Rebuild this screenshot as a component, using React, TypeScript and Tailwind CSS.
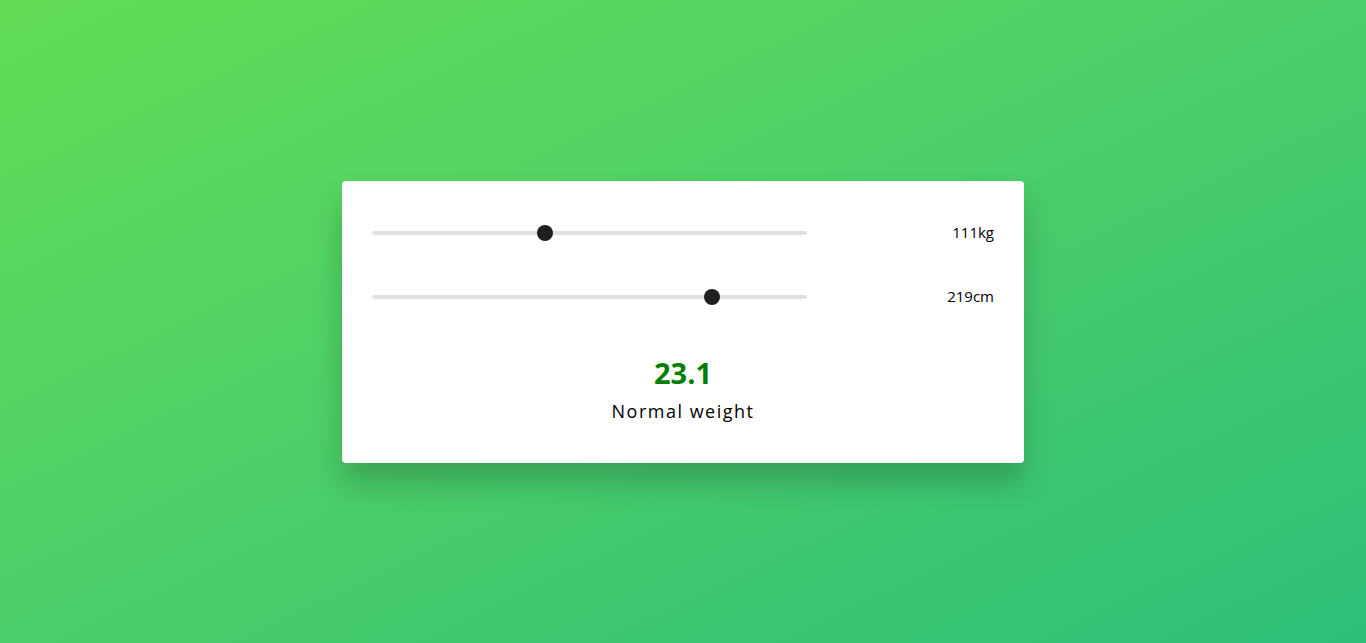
const font = { fontFamily: '"Open Sans", "Liberation Sans", sans-serif' };

function Slider({ pos }: { pos: number }) {
  return (
    <div className="relative w-[435px] h-4 flex items-center">
      <div className="w-full h-1 rounded-full bg-[#e0e0e0]" />
      <div
        className="absolute top-0 w-4 h-4 -ml-2 rounded-full bg-[#1f1f1f]"
        style={{ left: `${pos * 100}%` }}
      />
    </div>
  );
}

export default function App() {
  const rows = [
    { pos: 0.398, label: "111kg" },
    { pos: 0.782, label: "219cm" },
  ];
  return (
    <div
      className="min-h-[643px] w-full flex items-center justify-center bg-gradient-to-br from-[#63dd55] to-[#2cbf78]"
      style={font}
    >
      <div className="w-[682px] bg-white rounded-[4px] px-[30px] pt-9 pb-10 shadow-[0_20px_30px_rgba(0,0,0,0.2)]">
        <div className="flex flex-col gap-8">
          {rows.map((r) => (
            <div key={r.label} className="h-8 flex items-center">
              <Slider pos={r.pos} />
              <span className="flex-1 text-right text-[15px] font-medium text-black">
                {r.label}
              </span>
            </div>
          ))}
        </div>
        <div className="mt-[42px] flex flex-col items-center gap-2">
          <p className="text-[29px] leading-9 font-bold text-[#008000]">23.1</p>
          <p className="text-[18px] leading-6 font-medium text-black tracking-[1.5px]">Normal weight</p>
        </div>
      </div>
    </div>
  );
}
